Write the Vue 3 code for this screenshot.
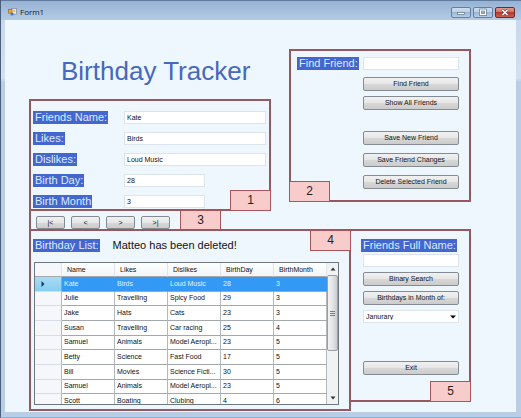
<script setup>
import { ref } from 'vue'

const details = ref([
  { id: 'name', label: 'Friends Name:', value: 'Kate' },
  { id: 'likes', label: 'Likes:', value: 'Birds' },
  { id: 'dislikes', label: 'Dislikes:', value: 'Loud Music' },
  { id: 'day', label: 'Birth Day:', value: '28', short: true },
  { id: 'month', label: 'Birth Month', value: '3', short: true },
])
const steps = ['|<', '<', '>', '>|']
const columns = ['Name', 'Likes', 'Dislikes', 'BirthDay', 'BirthMonth']
const friends = [
  ['Kate', 'Birds', 'Loud Music', 28, 3],
  ['Julie', 'Travelling', 'Spicy Food', 29, 3],
  ['Jake', 'Hats', 'Cats', 23, 3],
  ['Susan', 'Travelling', 'Car racing', 25, 4],
  ['Samuel', 'Animals', 'Model Aeropl...', 23, 5],
  ['Betty', 'Science', 'Fast Food', 17, 5],
  ['Bill', 'Movies', 'Science Ficti...', 30, 5],
  ['Samuel', 'Animals', 'Model Aeropl...', 23, 5],
  ['Scott', 'Boating', 'Clubing', 4, 6],
]
const selected = ref(0)
const findText = ref('')
const fullName = ref('')
const month = ref('Janurary')
</script>

<template>
  <div class="window">
    <header class="titlebar">
      <svg class="app-icon" viewBox="0 0 9 8">
        <rect x="3.5" y="0.5" width="5" height="5.5" fill="#f4f7fb" stroke="#77869c" stroke-width="0.7" />
        <rect x="0.5" y="1.5" width="3.6" height="3.6" fill="#e9a73c" stroke="#a06a24" stroke-width="0.7" />
        <rect x="5" y="1.6" width="2.6" height="2.6" fill="#f3c64d" />
        <rect x="2.6" y="4.8" width="2.8" height="2.6" fill="#4d76c2" />
      </svg>
      <span class="caption">Form1</span>
      <div class="window-buttons">
        <button type="button" aria-label="Minimize">
          <svg viewBox="0 0 18 9"><rect x="5.5" y="4.5" width="7" height="2" fill="#fff" stroke="#5c6f8a" stroke-width="0.7" /></svg>
        </button>
        <button type="button" aria-label="Maximize">
          <svg viewBox="0 0 18 9">
            <rect x="6.5" y="2" width="5" height="4.5" fill="none" stroke="#5c6f8a" stroke-width="2.6" />
            <rect x="6.5" y="2" width="5" height="4.5" fill="none" stroke="#fff" stroke-width="1.3" />
          </svg>
        </button>
        <button type="button" aria-label="Close" class="close">
          <svg viewBox="0 0 18 9">
            <path d="M6.5 2l5 5M11.5 2l-5 5" stroke="#7c3a3e" stroke-width="2.6" />
            <path d="M6.5 2l5 5M11.5 2l-5 5" stroke="#fff" stroke-width="1.5" />
          </svg>
        </button>
      </div>
    </header>

    <main class="client">
      <div class="top">
        <div class="left">
          <h1>Birthday Tracker</h1>
          <section class="panel details">
            <div v-for="d in details" :key="d.id" class="field">
              <span><label :for="d.id" class="tag">{{ d.label }}</label></span>
              <input :id="d.id" v-model="d.value" type="text" :class="{ short: d.short }" />
            </div>
            <span class="badge at-end">1</span>
          </section>
          <nav class="steps">
            <button v-for="s in steps" :key="s" type="button" class="btn">{{ s }}</button>
            <span class="badge step-badge">3</span>
          </nav>
        </div>

        <section class="panel find">
          <div class="find-row">
            <label for="find" class="tag">Find Friend:</label>
            <input id="find" v-model="findText" type="text" />
          </div>
          <div class="stack view-actions">
            <button type="button" class="btn">Find Friend</button>
            <button type="button" class="btn">Show All Friends</button>
          </div>
          <div class="stack save-actions">
            <button type="button" class="btn">Save New Friend</button>
            <button type="button" class="btn">Save Friend Changes</button>
            <button type="button" class="btn">Delete Selected Friend</button>
          </div>
          <span class="badge at-start">2</span>
        </section>
      </div>

      <div class="bottom">
        <section class="panel list">
          <div class="list-head">
            <h2 class="tag">Birthday List:</h2>
            <p>Matteo has been deleted!</p>
          </div>
          <div class="data-grid">
            <div class="rows">
              <table>
                <thead>
                  <tr>
                    <th class="row-head"></th>
                    <th v-for="c in columns" :key="c" scope="col">{{ c }}</th>
                  </tr>
                </thead>
                <tbody>
                  <tr v-for="(f, i) in friends" :key="i" :class="{ current: i === selected }" @click="selected = i">
                    <td class="row-head">
                      <svg v-if="i === selected" viewBox="0 0 4 6"><path d="M0.5 0v6l3-3z" fill="#123a68" /></svg>
                    </td>
                    <td v-for="(v, j) in f" :key="j">{{ v }}</td>
                  </tr>
                </tbody>
              </table>
            </div>
            <div class="scrollbar">
              <svg class="arrow" viewBox="0 0 6 4"><path d="M0.5 3.5h5L3 0.5z" fill="#333" /></svg>
              <div class="track">
                <div class="thumb"><i></i><i></i><i></i></div>
              </div>
              <svg class="arrow" viewBox="0 0 6 4"><path d="M0.5 0.5h5L3 3.5z" fill="#333" /></svg>
            </div>
          </div>
          <span class="badge at-top">4</span>
        </section>

        <section class="panel search">
          <label for="full-name" class="tag">Friends Full Name:</label>
          <div class="stack search-stack">
            <input id="full-name" v-model="fullName" type="text" />
            <button type="button" class="btn">Binary Search</button>
            <button type="button" class="btn">Birthdays in Month of:</button>
            <div class="select">
              <select v-model="month" aria-label="Month">
                <option>Janurary</option>
              </select>
              <svg viewBox="0 0 6 4"><path d="M0 0.5h6L3 3.5z" fill="#000" /></svg>
            </div>
            <button type="button" class="btn exit">Exit</button>
          </div>
          <span class="badge at-end">5</span>
        </section>
      </div>
    </main>
  </div>
</template>

<style>
body {
  margin: 0;
  background: #b9cde6;
}
</style>

<style scoped>
* {
  box-sizing: border-box;
}

.window {
  display: flex;
  flex-direction: column;
  min-height: 100vh;
  padding: 0 5px 5px 4px;
  border-bottom: 1px solid #62c3dc;
  border-left: 1px solid #4b5f7c;
  background: linear-gradient(#c5d5ea, #d3e0f0 78px, #b9cde4 82px);
  font-family: "Liberation Sans", Arial, sans-serif;
  font-size: 7px;
  color: #111;
}

.titlebar {
  display: flex;
  align-items: center;
  height: 20px;
  margin: 0 -5px 0 -4px;
  padding: 3px 6px 0 7px;
  border-top: 1px solid #5f7a9c;
  background: linear-gradient(#96b2d4, #a9c1df 60%, #b4cae3);
}

.app-icon {
  width: 9px;
  height: 8px;
}

.caption {
  flex: 1;
  margin-left: 3px;
  font-family: "Open Sans", sans-serif;
  font-size: 8px;
  line-height: 10px;
  color: #10181f;
}

.window-buttons {
  display: flex;
  gap: 2px;
}

.window-buttons button {
  width: 20px;
  height: 11px;
  padding: 0;
  border: 1px solid #64809f;
  border-radius: 2px;
  background: linear-gradient(#cfdeee, #b9cde3 50%, #9bb6d4 50%, #b7cde4);
}

.window-buttons .close {
  border-color: #6b2b33;
  background: linear-gradient(#dc9a90, #cf6c5f 50%, #b53a2e 50%, #c95f50);
}

.window-buttons svg {
  display: block;
  width: 100%;
  height: 100%;
}

.client {
  flex: 1;
  padding: 29px 45px 1px 24px;
  background: #eef7fe;
}

.top {
  display: grid;
  grid-template-columns: 242fr 182fr;
  align-items: start;
  gap: 18px;
}

.bottom {
  display: grid;
  grid-template-columns: 320fr 122fr;
  align-items: start;
}

h1 {
  margin: 0;
  padding: 7px 0 13px 32px;
  font-size: 26px;
  font-weight: 400;
  line-height: 30px;
  white-space: nowrap;
  color: #4668bd;
}

.panel {
  position: relative;
  border: 2px solid #945a60;
}

.tag {
  display: inline-block;
  height: 13px;
  margin: 0;
  padding: 0 1px 0 2px;
  background: #4367cf;
  color: #dcebff;
  font-size: 11px;
  font-weight: 400;
  line-height: 13px;
  white-space: nowrap;
}

input,
select {
  display: block;
  width: 100%;
  height: 13px;
  padding: 0 2px;
  border: 1px solid #dde5ec;
  border-radius: 0;
  background: #fff;
  color: #111;
  font: inherit;
  outline: none;
}

.btn {
  height: 14px;
  padding: 0;
  border: 1px solid #858b93;
  border-radius: 2px;
  background: linear-gradient(#f1f1f1, #e6e6e6 50%, #d8d8d8 50%, #cccccc);
  color: #111;
  font: inherit;
  line-height: 12px;
  white-space: nowrap;
}

.badge {
  position: absolute;
  width: 41px;
  height: 21px;
  border: 1px solid #a8555b;
  background: #f9cccc;
  color: #222;
  font-size: 12px;
  line-height: 19px;
  text-align: center;
}

.at-end {
  right: -2px;
  bottom: -2px;
}

.at-start {
  left: -2px;
  bottom: -2px;
}

.at-top {
  right: -2px;
  top: -1px;
}

.details {
  display: grid;
  gap: 8px;
  padding: 10px 3px 1px 2px;
}

.field {
  display: grid;
  grid-template-columns: 91px 1fr;
}

.field span {
  display: flex;
}

.field .short {
  width: 57%;
}

.steps {
  position: relative;
  display: flex;
  gap: 6px;
  width: 192px;
  height: 18px;
  padding: 5px 0 0 5px;
  border-left: 2px solid #945a60;
}

.steps .btn {
  width: 29px;
  height: 13px;
  line-height: 11px;
}

.step-badge {
  right: 0;
  top: -1px;
}

.find {
  padding: 6px 10px 11px 6px;
}

.find-row {
  display: grid;
  grid-template-columns: 62px 1fr;
  gap: 4px;
}

.stack {
  display: flex;
  flex-direction: column;
}

.view-actions {
  gap: 5px;
  margin: 7px 0 0 66px;
}

.save-actions {
  gap: 8px;
  margin: 21px 0 0 66px;
}

.list {
  z-index: 1;
  margin-right: -2px;
  padding: 8px 10px 4px 3px;
}

.list-head {
  display: flex;
  gap: 13px;
  margin-left: -1px;
}

.list-head p {
  margin: 0;
  font-size: 11px;
  line-height: 13px;
}

.data-grid {
  display: flex;
  height: 143px;
  margin-top: 10px;
  overflow: hidden;
  border: 1px solid #70787f;
  background: #fff;
}

.rows {
  flex: 1;
  min-width: 0;
}

table {
  width: 100%;
  height: 146px;
  table-layout: fixed;
  border-collapse: separate;
  border-spacing: 0;
  background: #fff;
}

th,
td {
  padding: 0 0 0 2px;
  border-right: 1px solid #b3b8bd;
  border-bottom: 1px solid #a3a8ad;
  overflow: hidden;
  text-align: left;
  font-weight: 400;
  line-height: 10px;
  white-space: nowrap;
}

th {
  height: 14px;
  padding-left: 5px;
  border-right-color: #e0e3e8;
  background: linear-gradient(#fff, #f2f4f8);
}

.row-head {
  width: 27px;
  padding-left: 6px;
  background: #f5f7fb;
}

td.row-head {
  border-bottom-color: #d9dee6;
}

.row-head svg {
  display: block;
  width: 4px;
  height: 6px;
}

.current td {
  border-right-color: #3399f5;
  background: #3399f5;
  color: #e4f3ff;
}

.current .row-head {
  border-right-color: #6fb4d8;
  background: linear-gradient(#a9dcf5, #86cdf0);
}

.scrollbar {
  display: flex;
  flex-direction: column;
  align-items: center;
  width: 11px;
  padding: 4px 0;
  background: #f1f2f4;
}

.arrow {
  flex: none;
  width: 6px;
  height: 4px;
}

.track {
  flex: 1;
  align-self: stretch;
  padding: 4px 0;
}

.thumb {
  display: flex;
  flex-direction: column;
  align-items: center;
  justify-content: center;
  gap: 1px;
  height: 65%;
  border: 1px solid #9a9fa5;
  border-radius: 2px;
  background: linear-gradient(90deg, #f3f3f4, #e3e4e6 50%, #cbcdd1);
}

.thumb i {
  width: 5px;
  height: 1px;
  background: #777d84;
}

.search {
  padding: 8px 10px 25px;
}

.search .tag {
  display: block;
  width: max-content;
}

.search-stack {
  gap: 5px;
  margin: 2px 0 0 2px;
}

.select {
  position: relative;
}

.select select {
  appearance: none;
}

.select svg {
  position: absolute;
  right: 3px;
  top: 5px;
  width: 6px;
  height: 4px;
}

.exit {
  margin-top: 33px;
}
</style>
